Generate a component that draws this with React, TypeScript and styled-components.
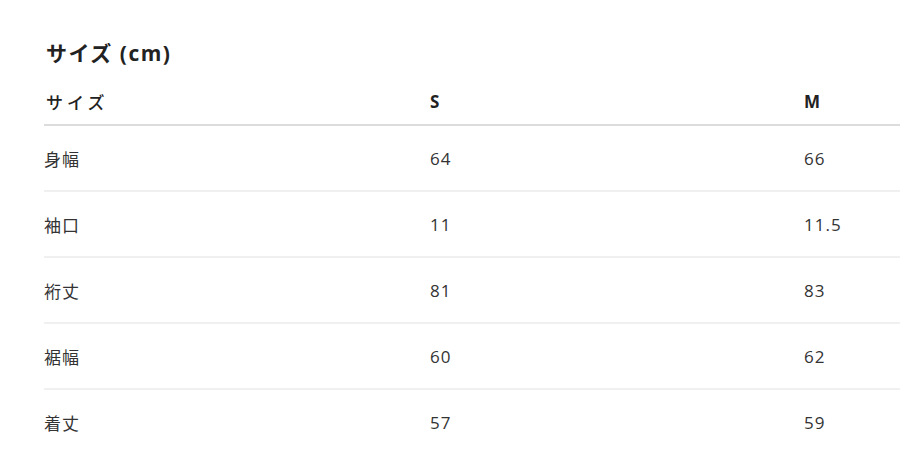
import styled, { createGlobalStyle } from "styled-components";

const Global = createGlobalStyle`
  body {
    margin: 0;
    background: #fff;
    font-family: "Open Sans", "Noto Sans CJK JP", sans-serif;
    color: #333;
  }
`;

const rows = [
  { name: "身幅", s: "64", m: "66" },
  { name: "袖口", s: "11", m: "11.5" },
  { name: "裄丈", s: "81", m: "83" },
  { name: "裾幅", s: "60", m: "62" },
  { name: "着丈", s: "57", m: "59" },
];

export default function App() {
  return (
    <Page>
      <Global />
      <Title>サイズ (cm)</Title>
      <Table>
        <HeadRow>
          <Cell $wide>サイズ</Cell>
          <Cell $bold>S</Cell>
          <Cell $bold>M</Cell>
        </HeadRow>
        {rows.map((r, i) => (
          <Row key={r.name} $last={i === rows.length - 1}>
            <Cell>{r.name}</Cell>
            <Cell>{r.s}</Cell>
            <Cell>{r.m}</Cell>
          </Row>
        ))}
      </Table>
    </Page>
  );
}

const Page = styled.div`
  padding: 38px 0 0 44px;
`;
const Title = styled.h2`
  margin: 0 0 12px 2px;
  font-size: 21px;
  font-weight: 700;
  letter-spacing: 1.5px;
  line-height: 30px;
  color: #222;
`;
const Table = styled.div`
  display: flex;
  flex-direction: column;
`;
const HeadRow = styled.div`
  display: grid;
  grid-template-columns: 386px 374px 1fr;
  align-items: center;
  height: 42px;
  padding-bottom: 2px;
  border-bottom: 2px solid #dcdcdc;
  font-size: 17px;
  color: #222;
`;
const Row = styled.div<{ $last?: boolean }>`
  display: grid;
  grid-template-columns: 386px 374px 1fr;
  align-items: center;
  height: 64px;
  border-bottom: ${(p) => (p.$last ? "none" : "2px solid #f0f0f0")};
  font-size: 17px;
  letter-spacing: 1px;
`;
const Cell = styled.div<{ $bold?: boolean; $wide?: boolean }>`
  font-weight: ${(p) => (p.$bold ? 700 : p.$wide ? 500 : 400)};
  letter-spacing: ${(p) => (p.$wide ? "4px" : "inherit")};
  padding-left: ${(p) => (p.$wide ? "2px" : "0")};
`;
